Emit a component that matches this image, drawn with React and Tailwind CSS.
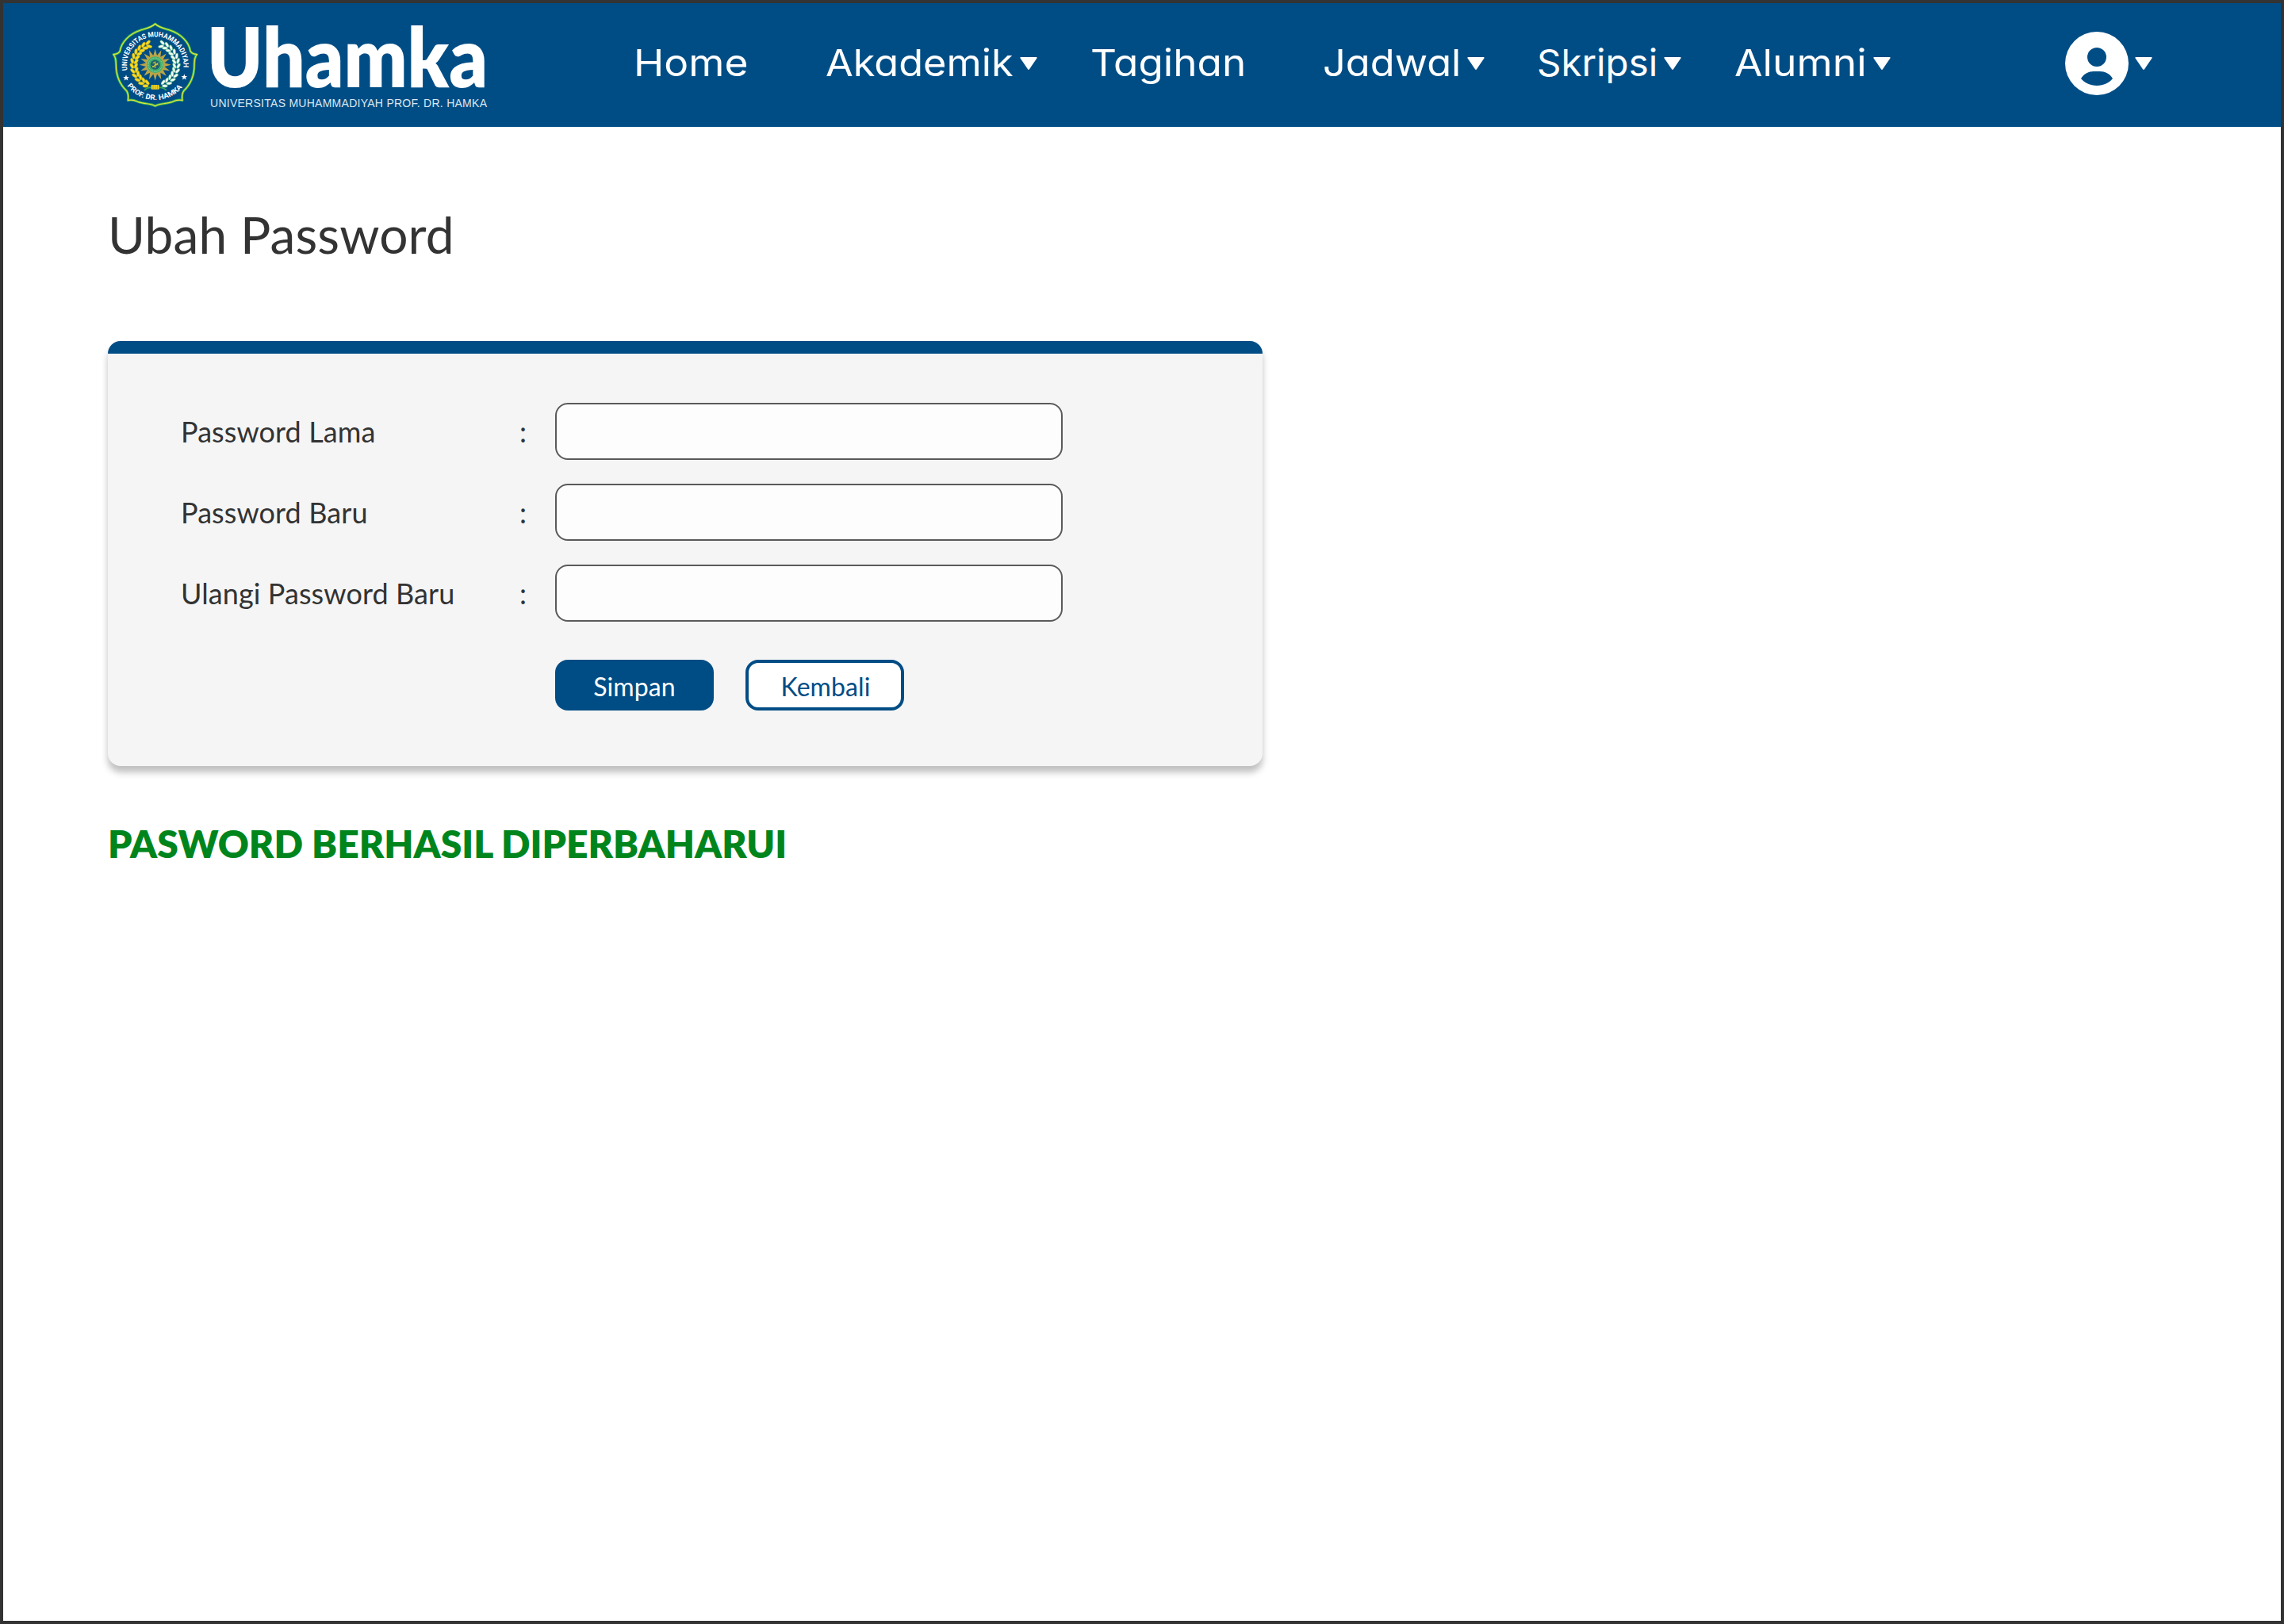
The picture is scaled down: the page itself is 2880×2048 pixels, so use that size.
function Caret({ className = "" }) {
  return (
    <svg viewBox="0 0 22 16" className={"h-4 w-[22px] shrink-0 " + className} fill="#fff">
      <path d="M1.200 0h19.600q1.300.2.600 1.400L12 15.300q-1 1.200-2 0L.6 1.400Q-.1.200 1.200 0Z" />
    </svg>
  );
}

const rad = (deg) => (deg * Math.PI) / 180;

// Points of a star with alternating outer and inner radii.
function burst(cx, cy, outer, inner, points, start = -90) {
  return Array.from({ length: points * 2 }, (_, i) => {
    const r = i % 2 ? inner : outer;
    const a = rad(start + (i * 180) / points);
    return (cx + r * Math.cos(a)).toFixed(1) + "," + (cy + r * Math.sin(a)).toFixed(1);
  }).join(" ");
}

const OUTLINE =
  "M227 60 C240 74 262 78 282 84 C325 98 355 130 360 163 C364 172 374 175 385 176 C375 186 375 200 375 216 C375 258 358 292 335 314 C329 323 328 338 330 350 C316 345 304 350 292 355 C268 364 243 361 227 371 C211 361 186 364 162 355 C150 350 138 345 124 350 C126 338 125 323 119 314 C96 292 79 258 79 216 C79 200 79 186 69 176 C80 175 90 172 94 163 C99 130 129 98 172 84 C192 78 214 74 227 60Z";

function Wreath({ side }) {
  const leaves = [];
  for (let i = 0; i < 12; i++) {
    const a = side === "left" ? 252 - i * 12.5 : -72 + i * 12.5;
    [73, 88].forEach((r, k) => {
      const x = 227 + r * Math.cos(rad(a));
      const y = 215 + r * Math.sin(rad(a));
      const tangent = side === "left" ? a + 90 : a - 90;
      const tilt = (side === "left" ? 1 : -1) * (k ? -28 : 28);
      leaves.push(
        <ellipse
          key={i + "-" + k}
          cx={x}
          cy={y}
          rx="11"
          ry="5.500"
          fill={side === "left" ? "#fbd91f" : "#f4fbf6"}
          stroke={side === "left" ? "#a8a01c" : "#1fa05c"}
          strokeWidth="1.500"
          transform={`rotate(${tangent + tilt} ${x} ${y})`}
        />
      );
    });
  }
  return <g>{leaves}</g>;
}

function Emblem() {
  return (
    <svg viewBox="60 48 336 336" className="size-28 shrink-0">
      <defs>
        <path id="arc-top" d="M122 236 A107 107 0 1 1 333 231" />
        <path id="arc-bottom" d="M121 295 A133 133 0 0 0 335 293" />
      </defs>
      <path d={OUTLINE} fill="#004d85" stroke="#35b255" strokeWidth="9" strokeLinejoin="round" />
      <path d={OUTLINE} fill="none" stroke="#e6e43c" strokeWidth="3.500" strokeLinejoin="round" />
      <g fill="#fff" fontFamily="Roboto, 'Liberation Sans', sans-serif" fontWeight="700">
        <text fontSize="27">
          <textPath href="#arc-top" textLength="366" lengthAdjust="spacingAndGlyphs">
            UNIVERSITAS MUHAMMADIYAH
          </textPath>
        </text>
        <text fontSize="27">
          <textPath href="#arc-bottom" textLength="240" lengthAdjust="spacingAndGlyphs">
            PROF. DR. HAMKA
          </textPath>
        </text>
      </g>
      <polygon points={burst(117, 265, 12, 5, 5)} fill="#fff" />
      <polygon points={burst(337, 262, 12, 5, 5)} fill="#fff" />
      <Wreath side="left" />
      <Wreath side="right" />
      <path d="M212 302Q200 298 186 312M242 302Q255 298 270 312" stroke="#35a955" strokeWidth="5" fill="none" />
      <rect x="212" y="291" width="30" height="17" rx="3" fill="#f6d626" />
      <path d="M219 291v17M227 291v17M235 291v17" stroke="#8d8a1c" strokeWidth="2" />
      <polygon points={burst(227, 215, 60, 36, 16)} fill="#b9a548" />
      <circle cx="227" cy="215" r="31" fill="#3fae6a" />
      <circle cx="227" cy="215" r="26" fill="none" stroke="#a9dcb4" strokeWidth="3" strokeDasharray="4 3" />
      <circle cx="227" cy="215" r="18" fill="#1c5f6e" />
      <path d="M215 218q6 10 12 0t12-2M218 208q8-6 10 4t10-4M227 202v26M216 224l22-16" stroke="#d8cc3f" strokeWidth="3" fill="none" />
    </svg>
  );
}

function Wordmark() {
  return (
    <svg viewBox="0 0 350 112" className="h-28 w-[350px] shrink-0 overflow-visible" fill="#fff">
      <text x="-3" y="84" fontFamily="Lato, sans-serif" fontWeight="800" fontSize="105" textLength="354" lengthAdjust="spacingAndGlyphs">
        Uhamka
      </text>
      <text x="1" y="109" fill="#dbe7f0" fontFamily="'Liberation Sans', Arial, sans-serif" fontSize="14" textLength="349">
        UNIVERSITAS MUHAMMADIYAH PROF. DR. HAMKA
      </text>
    </svg>
  );
}

const NAV = [
  { label: "Home", slot: "w-[242px]", scale: "scale-x-[1.097]" },
  { label: "Akademik", slot: "w-[334px]", scale: "scale-x-[1.073]", text: "w-[245px]" },
  { label: "Tagihan", slot: "w-[293px]", scale: "scale-x-[1.09]" },
  { label: "Jadwal", slot: "w-[270px]", scale: "scale-x-[1.075]", text: "w-[182px]" },
  { label: "Skripsi", slot: "w-[249px]", scale: "scale-x-[1.01]", text: "w-[160px]" },
  { label: "Alumni", slot: "w-[197px]", scale: "scale-x-[1.097]", text: "w-[175px]" },
];

const FIELDS = ["Password Lama", "Password Baru", "Ulangi Password Baru"];

function NavItem({ label, slot, scale, text }) {
  return (
    <a className={"flex shrink-0 items-center " + slot}>
      <span className={"shrink-0 " + (text || "")}>
        <span className={"inline-block origin-left [font-feature-settings:'cv11'] " + scale}>{label}</span>
      </span>
      {text && <Caret className="mt-1" />}
    </a>
  );
}

export default function App() {
  return (
    <div className="flex h-[2048px] w-[2880px] flex-col border-4 border-[#333] bg-white font-['Lato',sans-serif] text-[#333]">
      <header className="flex h-[156px] shrink-0 items-center bg-[#004d85] pl-[136px] text-white">
        <Emblem />
        <div className="ml-3">
          <Wordmark />
        </div>
        <nav className="ml-[185px] flex items-center pb-2 font-['Inter',sans-serif] text-[47px] leading-none">
          {NAV.map((item) => (
            <NavItem key={item.label} {...item} />
          ))}
        </nav>
        <div className="ml-[220px] flex items-center gap-2 pb-1">
          <svg viewBox="0 0 80 80" className="size-20">
            <circle cx="40" cy="40" r="40" fill="#fff" />
            <circle cx="40" cy="32" r="12" fill="#004d85" />
            <path d="M20 59C23.500 53 30 50 36 50h8c6 0 12.500 3 16 9-4.500 5.500-11.500 9-20 9s-15.500-3.500-20-9Z" fill="#004d85" />
          </svg>
          <Caret />
        </div>
      </header>

      <main className="flex flex-col items-start px-[132px] pt-[104px]">
        <h1 className="text-[64px] leading-none tracking-[0.15px]">Ubah Password</h1>

        <section className="mt-[102px] h-[536px] w-[1456px] rounded-2xl bg-[#f5f5f5] shadow-[0_8px_8px_rgba(0,0,0,0.25)]">
          <div className="h-4 rounded-t-2xl bg-[#004d85]" />
          <form className="pl-[92px] pt-[62px]">
            <div className="flex flex-col gap-[30px]">
              {FIELDS.map((label) => (
                <label key={label} className="flex h-[72px] items-center text-4xl leading-none tracking-[0.09px]">
                  <span className="w-[427px]">{label}</span>
                  <span className="w-[45px]">:</span>
                  <input type="password" className="h-[72px] w-[640px] rounded-2xl border-2 border-[#5a5a5a] bg-[#fdfdfd] px-6" />
                </label>
              ))}
            </div>
            <div className="ml-[472px] mt-12 flex gap-10 text-[32px] leading-none tracking-[0.08px]">
              <button type="button" className="h-16 w-[200px] rounded-2xl bg-[#004d85] pt-[3px] text-white">
                Simpan
              </button>
              <button type="button" className="h-16 w-[200px] rounded-2xl border-4 border-[#004d85] bg-white pt-[3px] pl-[2px] text-[#004d85]">
                Kembali
              </button>
            </div>
          </form>
        </section>

        <p className="mt-[74px] text-5xl leading-none font-extrabold text-[#00851d]">PASWORD BERHASIL DIPERBAHARUI</p>
      </main>
    </div>
  );
}
